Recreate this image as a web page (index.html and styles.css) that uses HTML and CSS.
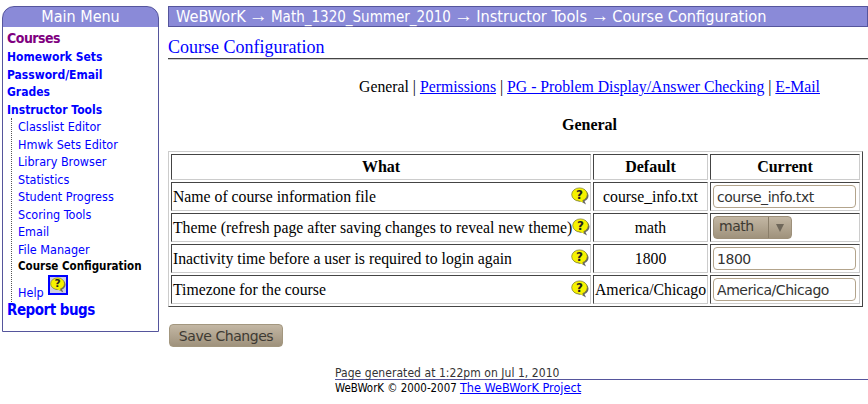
FILE: index.html
```html
<!DOCTYPE html>
<html lang="en">
<head>
<meta charset="utf-8">
<title>Course Configuration</title>
<link rel="stylesheet" href="styles.css">
</head>
<body>
<svg class="defs" width="0" height="0" aria-hidden="true">
  <symbol id="bubble" viewBox="0 0 18 18">
    <path d="M9.500 2.500c4.500 0 8 2.700 8 6.200 0 2.400-1.600 4.300-4 5.400l1.500 3.400-5-3C5.500 14.500 2 12 2 8.700c0-3.500 3.200-6.200 7.500-6.200z" fill="#666"/>
    <ellipse cx="8.500" cy="7.500" rx="7.800" ry="6.600" fill="#f6f200" stroke="#77772a" stroke-width="0.7"/>
    <path d="M8 13.800l4 1.800-1-3.300z" fill="#f6f200"/>
    <text x="8.500" y="11.700" text-anchor="middle" class="qmark">?</text>
  </symbol>
</svg>
<div class="page">
  <nav class="sidebar">
    <h2 class="menu-title">Main Menu</h2>
    <ul class="menu">
      <li class="top visited"><a href="#">Courses</a></li>
      <li class="top"><a href="#">Homework Sets</a></li>
      <li class="top"><a href="#">Password/Email</a></li>
      <li class="top"><a href="#">Grades</a></li>
      <li class="top"><a href="#">Instructor Tools</a></li>
      <li>
        <ul class="submenu">
          <li><a href="#">Classlist Editor</a></li>
          <li><a href="#">Hmwk Sets Editor</a></li>
          <li><a href="#">Library Browser</a></li>
          <li><a href="#">Statistics</a></li>
          <li><a href="#">Student Progress</a></li>
          <li><a href="#">Scoring Tools</a></li>
          <li><a href="#">Email</a></li>
          <li><a href="#">File Manager</a></li>
          <li class="current">Course Configuration</li>
          <li class="help"><a href="#">Help</a><a href="#" class="help-box"><svg class="icon"><use href="#bubble"/></svg></a></li>
        </ul>
      </li>
      <li class="report"><a href="#">Report bugs</a></li>
    </ul>
  </nav>
  <div class="main">
    <div class="crumbs">WeBWorK <span class="arrow">→</span> <span class="course-name">Math_1320_Summer_2010</span> <span class="arrow">→</span> Instructor Tools <span class="arrow">→</span> Course Configuration</div>
    <h1 class="title">Course Configuration</h1>
    <div class="tabs">General | <a href="#">Permissions</a> | <a href="#">PG - Problem Display/Answer Checking</a> | <a href="#">E-Mail</a></div>
    <h3 class="section">General</h3>
    <table class="config">
      <tr><th class="c1">What</th><th class="c2">Default</th><th class="c3">Current</th></tr>
      <tr>
        <td><div class="what"><span>Name of course information file</span><svg class="icon"><use href="#bubble"/></svg></div></td>
        <td class="def">course_info.txt</td>
        <td><input class="field" type="text" value="course_info.txt"></td>
      </tr>
      <tr>
        <td><div class="what"><span>Theme (refresh page after saving changes to reveal new theme)</span><svg class="icon"><use href="#bubble"/></svg></div></td>
        <td class="def">math</td>
        <td><div class="select"><span class="select-value">math</span><span class="select-arrow"></span></div></td>
      </tr>
      <tr>
        <td><div class="what"><span>Inactivity time before a user is required to login again</span><svg class="icon"><use href="#bubble"/></svg></div></td>
        <td class="def">1800</td>
        <td><input class="field" type="text" value="1800"></td>
      </tr>
      <tr>
        <td><div class="what"><span>Timezone for the course</span><svg class="icon"><use href="#bubble"/></svg></div></td>
        <td class="def">America/Chicago</td>
        <td><input class="field" type="text" value="America/Chicago"></td>
      </tr>
    </table>
    <button class="save" type="button">Save Changes</button>
    <footer class="footer">
      <div class="generated">Page generated at 1:22pm on Jul 1, 2010</div>
      <div class="copyright">WeBWorK © 2000-2007 <a href="#">The WeBWorK Project</a></div>
    </footer>
  </div>
</div>
</body>
</html>
```
FILE: styles.css
```css
* { box-sizing: border-box; }
html, body { margin: 0; padding: 0; background: #fff; }
body { font-family: "Liberation Serif", serif; font-size: 15.75px; color: #000; height: 404px; overflow: hidden; }
.defs { position: absolute; }
a { color: #00f; }
.page { display: flex; align-items: flex-start; padding: 6px 0 0 2px; gap: 9px; }

.sidebar { width: 157px; height: 326px; flex: none; border: 1px solid #55559c; border-top-left-radius: 12px; border-top-right-radius: 12px; background: linear-gradient(#8a8ad8 20px, #fff 20px); font-family: "DejaVu Sans Condensed", "DejaVu Sans", sans-serif; }
.menu-title { margin: 0; height: 20px; color: #fff; font-size: 16px; line-height: 19px; font-weight: normal; text-align: center; }
.menu, .submenu { list-style: none; margin: 0; padding: 0; }
.menu { padding: 1px 0 0 4px; }
.menu a { text-decoration: none; }
.top { font-size: 12px; font-weight: bold; line-height: 17.500px; }
.visited { font-size: 14px; line-height: 21px; letter-spacing: -0.500px; }
.visited a { color: #800080; }
.submenu { margin: -1px 0 0 4px; padding-left: 6px; border-left: 1px dotted #555; }
.submenu li { font-size: 12.500px; line-height: 17.500px; }
.submenu .current { font-weight: bold; font-size: 11.500px; color: #000; }
.help { display: flex; align-items: flex-end; gap: 4px; height: 26px; }
.help-box { display: block; width: 20px; height: 20px; border: 2px solid #00f; background: #cfcfe0; margin-bottom: 7px; }
.help-box .icon { display: block; width: 16px; height: 16px; }
.report { font-size: 15px; font-weight: bold; line-height: 20px; margin-top: -2px; letter-spacing: -0.500px; }

.main { flex: 1; min-width: 0; }
.crumbs { height: 21px; background: #8a8ad8; border: 1px solid #55559c; color: #fff; font-family: "DejaVu Sans Condensed", "DejaVu Sans", sans-serif; font-size: 16.200px; line-height: 19px; padding-left: 7px; white-space: nowrap; }
.course-name { font-size: 15px; }
.arrow { font-family: "Liberation Serif", serif; font-size: 19px; line-height: 0; margin: 0 -1.500px; }
.title { margin: 9px 0 0; height: 23px; font-size: 18px; line-height: 22px; font-weight: normal; color: #00f; border-bottom: 1px solid #444; box-shadow: 0 1px 0 #ccc; }
.tabs { margin: 19px 0 0; padding-left: 143px; text-align: center; line-height: 17px; }
.section { margin: 21px 0 0; padding-left: 143px; text-align: center; font-size: 16px; line-height: 17px; }

.config { margin-top: 18px; width: 695px; table-layout: fixed; border-collapse: separate; border-spacing: 2px; border: 1px solid; border-color: #ccc #444 #444 #ccc; }
.config th, .config td { border: 1px solid; border-color: #444 #ccc #ccc #444; padding: 1px; }
.config th { font-size: 16px; height: 26px; }
.c1 { width: 420px; }
.c2 { width: 115px; }
.c3 { width: 150px; }
.config td { height: 29px; }
.def { text-align: center; white-space: nowrap; }
.what { display: flex; justify-content: space-between; align-items: center; white-space: nowrap; }
.what .icon { margin-top: -1px; }
.icon { width: 18px; height: 18px; flex: none; }
.qmark { font: bold 12px "DejaVu Sans", sans-serif; fill: #222; }

.field { display: block; width: 143px; height: 23px; margin: 0 0 0 1px; padding: 0 3px; border: 1px solid #b3a48c; border-radius: 4px; background: #fff; color: #333; font-family: "DejaVu Sans", sans-serif; font-size: 14px; letter-spacing: -0.450px; outline: none; }
.select { display: flex; width: 79px; height: 23px; margin-left: 1px; border-radius: 4px; border: 1px solid #9d907a; background: linear-gradient(#c3b7a4, #9f927c); color: #3e3a33; font-family: "DejaVu Sans", sans-serif; font-size: 14px; letter-spacing: -0.450px; line-height: 19px; }
.select-value { flex: 1; padding-left: 5px; border-right: 1px solid #8a7e6a; }
.select-arrow { width: 22px; position: relative; }
.select-arrow::after { content: ""; position: absolute; left: 7px; top: 7px; border: 4px solid transparent; border-top: 8px solid #6f675a; border-bottom: 0; }

.save { display: block; margin: 17px 0 0 1px; width: 114px; height: 23px; padding: 0; border: 1px solid #a3977f; border-radius: 4px; background: linear-gradient(#c3b7a4, #9f927c); color: #3e3a33; font-family: "DejaVu Sans", sans-serif; font-size: 14px; letter-spacing: -0.450px; }

.footer { margin: 19px 0 0 167px; font-family: "DejaVu Sans Condensed", "DejaVu Sans", sans-serif; font-size: 12px; line-height: 14px; }
.generated { color: #333; border-bottom: 1px solid #55559c; height: 14px; letter-spacing: 0.050px; }
.copyright { padding-top: 1px; font-size: 11.400px; }
.copyright a { font-size: 12.600px; }
```
